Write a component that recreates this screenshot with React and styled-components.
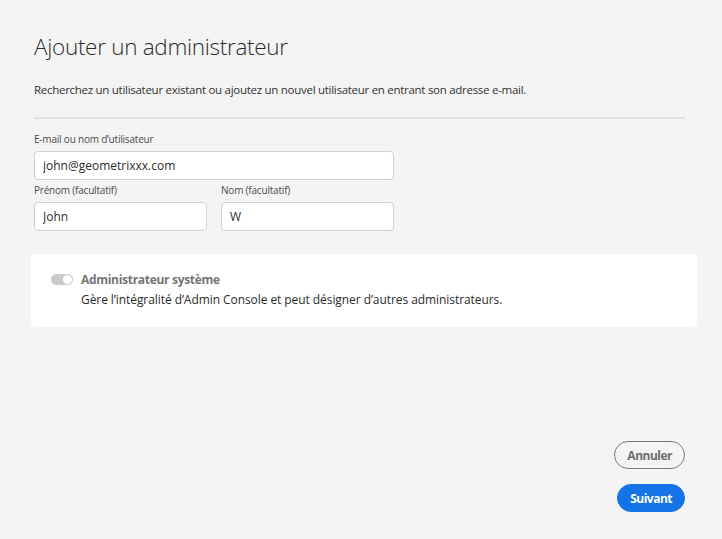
import React from 'react';
import styled, { createGlobalStyle } from 'styled-components';

const GlobalStyle = createGlobalStyle`
  html, body {
    margin: 0;
    padding: 0;
    background: #f4f4f4;
  }
  body {
    font-family: "Open Sans", "Liberation Sans", sans-serif;
    color: #2c2c2c;
  }
`;

const Page = styled.div`
  width: 722px;
  height: 539px;
  box-sizing: border-box;
  padding: 32px 37px 0 34px;
  display: flex;
  flex-direction: column;
  background: #f4f4f4;
`;

const Title = styled.h1`
  margin: 0;
  font-size: 22.5px;
  font-weight: 300;
  color: #2c2c2c;
  line-height: 30px;
  letter-spacing: -0.3px;
`;

const Intro = styled.p`
  margin: 20px 0 0;
  font-size: 11.5px;
  line-height: 16px;
  color: #323232;
  letter-spacing: -0.28px;
`;

const Divider = styled.hr`
  margin: 19px 0 0;
  border: 0;
  height: 2px;
  background: #e1e1e1;
`;

const Form = styled.div`
  margin-top: 13px;
  width: 360px;
  display: flex;
  flex-direction: column;
  gap: 3px;
`;

const Row = styled.div`
  display: grid;
  grid-template-columns: 173px 173px;
  column-gap: 14px;
`;

const Field = styled.label`
  display: flex;
  flex-direction: column;
  gap: 5px;
`;

const Label = styled.span`
  font-size: 10px;
  line-height: 14px;
  color: #4b4b4b;
  letter-spacing: -0.2px;
`;

const Input = styled.input`
  box-sizing: border-box;
  height: 29px;
  width: 100%;
  border: 1px solid #d0d0d0;
  border-radius: 4px;
  background: #fff;
  padding: 0 8px;
  font-family: inherit;
  font-size: 12px;
  color: #2c2c2c;
  outline: none;
`;

const Card = styled.div`
  margin: 23px 0 0 -3px;
  width: 666px;
  height: 73px;
  box-sizing: border-box;
  background: #fff;
  border-radius: 4px;
  padding: 19px 20px;
  display: flex;
  gap: 8px;
`;

const Toggle = styled.span`
  position: relative;
  flex: none;
  width: 22px;
  height: 11px;
  margin-top: 1px;
  border-radius: 6px;
  background: #cacaca;
  &::after {
    content: '';
    position: absolute;
    right: 0;
    top: 0;
    width: 9px;
    height: 9px;
    border: 1px solid #cacaca;
    border-radius: 50%;
    background: #fff;
  }
`;

const CardText = styled.div`
  display: flex;
  flex-direction: column;
  gap: 5px;
`;

const CardTitle = styled.span`
  font-size: 12px;
  font-weight: 700;
  line-height: 14px;
  color: #747474;
  letter-spacing: -0.3px;
`;

const CardDesc = styled.span`
  font-size: 12px;
  line-height: 16px;
  color: #2c2c2c;
  letter-spacing: -0.07px;
`;

const Actions = styled.div`
  margin-top: auto;
  margin-bottom: 27px;
  display: flex;
  flex-direction: column;
  align-items: flex-end;
  gap: 15px;
`;

const Button = styled.button`
  height: 28px;
  box-sizing: border-box;
  border-radius: 14px;
  padding: 0 12px;
  font-family: inherit;
  font-size: 12px;
  font-weight: 700;
  letter-spacing: -0.5px;
  cursor: pointer;
  border: ${p => (p.$primary ? '1px solid #1473e6' : '1px solid #7a7a7a')};
  background: ${p => (p.$primary ? '#1473e6' : 'transparent')};
  color: ${p => (p.$primary ? '#fff' : '#6e6e6e')};
`;

export default function App() {
  return (
    <>
      <GlobalStyle />
      <Page>
        <Title>Ajouter un administrateur</Title>
        <Intro>
          Recherchez un utilisateur existant ou ajoutez un nouvel utilisateur en entrant son adresse e-mail.
        </Intro>
        <Divider />
        <Form>
          <Field>
            <Label>E-mail ou nom d’utilisateur</Label>
            <Input defaultValue="john@geometrixxx.com" />
          </Field>
          <Row>
            <Field>
              <Label>Prénom (facultatif)</Label>
              <Input defaultValue="John" />
            </Field>
            <Field>
              <Label>Nom (facultatif)</Label>
              <Input defaultValue="W" />
            </Field>
          </Row>
        </Form>
        <Card>
          <Toggle />
          <CardText>
            <CardTitle>Administrateur système</CardTitle>
            <CardDesc>Gère l’intégralité d’Admin Console et peut désigner d’autres administrateurs.</CardDesc>
          </CardText>
        </Card>
        <Actions>
          <Button>Annuler</Button>
          <Button $primary>Suivant</Button>
        </Actions>
      </Page>
    </>
  );
}
